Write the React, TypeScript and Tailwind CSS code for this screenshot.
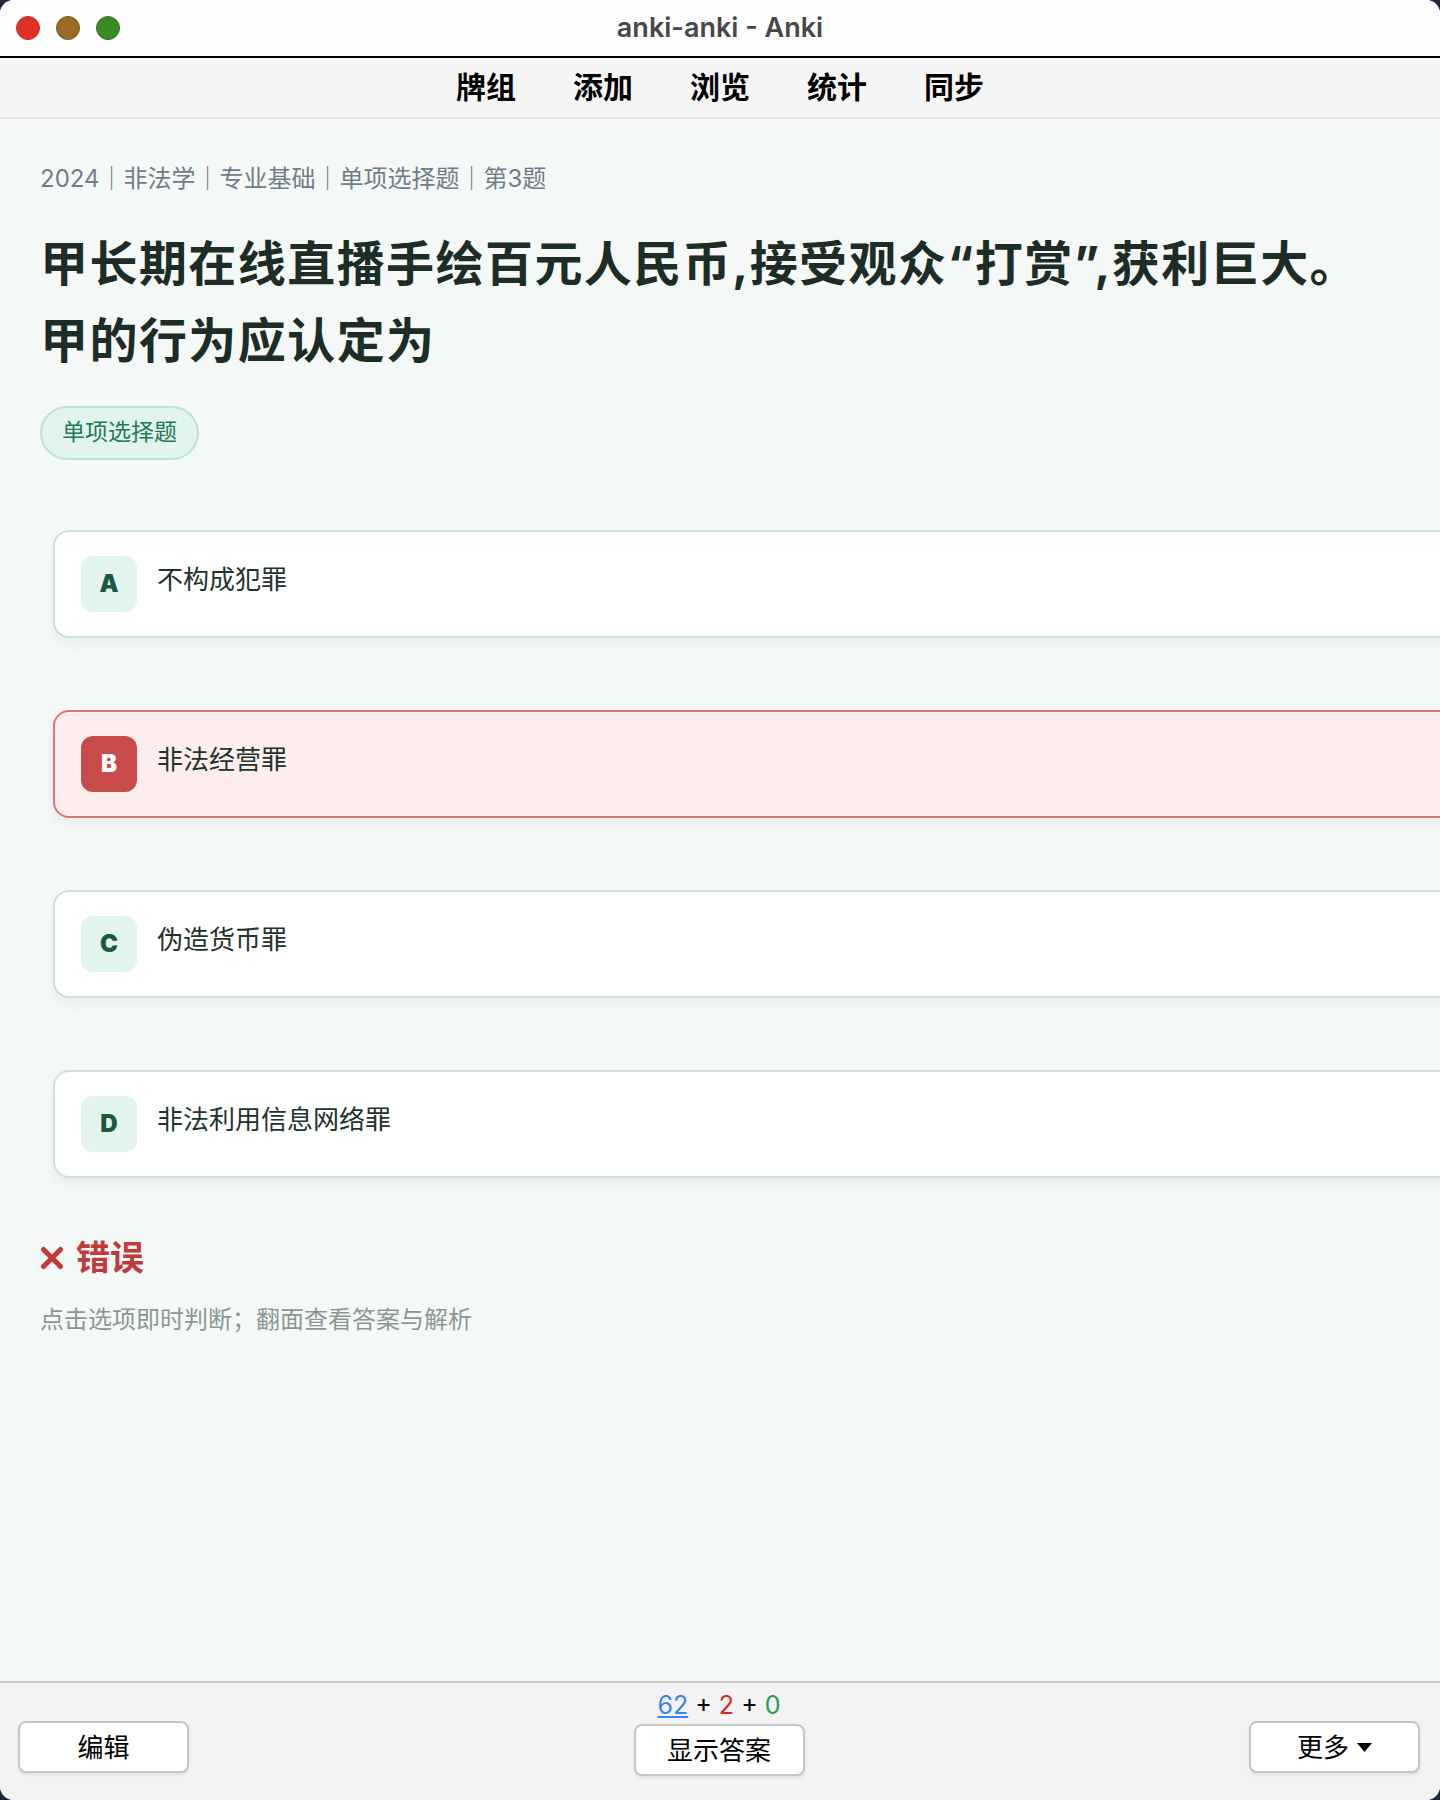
const cjk = "font-['Inter','Noto_Sans_CJK_SC',sans-serif]";

const options = [
  { key: "A", text: "不构成犯罪", wrong: false },
  { key: "B", text: "非法经营罪", wrong: true },
  { key: "C", text: "伪造货币罪", wrong: false },
  { key: "D", text: "非法利用信息网络罪", wrong: false },
];

function Option({ letter, text, wrong }: { letter: string; text: string; wrong: boolean }) {
  return (
    <div
      className={`ml-[13px] -mr-[80px] flex items-start gap-5 rounded-[16px] border-2 px-[26px] py-6 shadow-[0_6px_14px_rgba(20,60,45,0.05)] ${
        wrong ? "border-[#de7575] bg-[#fdeeed]" : "border-[#cfe0da] bg-white"
      }`}
    >
      <div
        className={`flex h-14 w-14 shrink-0 items-center justify-center rounded-[12px] text-[24px] font-black ${
          wrong ? "bg-[#c94c4c] text-white" : "bg-[#e3f3ee] text-[#175a40]"
        }`}
      >
        {letter}
      </div>
      <div className="text-[26px] leading-[48px] text-[#22332c]">{text}</div>
    </div>
  );
}

function Button({ children, className = "" }: { children: React.ReactNode; className?: string }) {
  return (
    <div
      className={`flex h-[52px] w-[171px] items-center justify-center gap-2 rounded-[8px] border-2 border-[#c6c6c6] bg-white text-[26px] text-black shadow-[0_2px_3px_rgba(0,0,0,0.08)] ${className}`}
    >
      {children}
    </div>
  );
}

export default function App() {
  return (
    <div className={`h-[1800px] w-[1440px] bg-[#1d2838] ${cjk}`}>
      <div className="flex h-full flex-col overflow-hidden rounded-[14px] bg-[#f4f8f7]">
        {/* title bar */}
        <div className="relative flex h-[58px] shrink-0 items-center justify-center border-b-2 border-black bg-[#fdfdfd]">
          <div className="absolute left-4 top-4 flex gap-4">
            <span className="h-6 w-6 rounded-full border border-[#c52a24] bg-[#e0302a]" />
            <span className="h-6 w-6 rounded-full border border-[#7a5a20] bg-[#9a6d24]" />
            <span className="h-6 w-6 rounded-full border border-[#2f7322] bg-[#3a8a28]" />
          </div>
          <span className="text-[27px] font-semibold text-[#474747]">anki-anki - Anki</span>
        </div>

        {/* toolbar */}
        <div className="flex h-[61px] shrink-0 items-center justify-center gap-[57px] border-b-2 border-[#e3e3e3] bg-[#f5f5f5] text-[30px] font-bold text-black">
          <span>牌组</span>
          <span>添加</span>
          <span>浏览</span>
          <span>统计</span>
          <span>同步</span>
        </div>

        {/* card content */}
        <div className="flex-1 overflow-hidden px-10 pt-[42px]">
          <div className="text-[24px] leading-9 text-[#6f7e86]">2024｜非法学｜专业基础｜单项选择题｜第3题</div>
          <h1 className="mt-[29px] max-w-[1340px] text-[48px] font-bold leading-[1.6] tracking-[0.03em] text-[#1b2d25]">
            甲长期在线直播手绘百元人民币,接受观众“打赏”,获利巨大。甲的行为应认定为
          </h1>
          <div className="mt-[26px] inline-flex h-[54px] items-center rounded-full border-2 border-[#bce4d3] bg-[#e1f4ed] px-5 text-[23px] text-[#227a56]">
            单项选择题
          </div>

          <div className="mt-[70px] flex flex-col gap-[72px]">
            {options.map((o) => (
              <Option key={o.key} letter={o.key} text={o.text} wrong={o.wrong} />
            ))}
          </div>

          <div className="mt-[56px] flex items-center gap-3 text-[34px] font-bold leading-[48px] text-[#c0393b]">
            <svg width="24" height="24" viewBox="0 0 24 24" className="shrink-0">
              <path d="M3.5 3.5 L20.5 20.5 M20.5 3.5 L3.5 20.5" stroke="#c0393b" strokeWidth="5" strokeLinecap="round" />
            </svg>
            <span>错误</span>
          </div>
          <div className="mt-5 text-[24px] leading-9 text-[#8a9893]">点击选项即时判断；翻面查看答案与解析</div>
        </div>

        {/* bottom bar */}
        <div className="flex h-[119px] shrink-0 items-start justify-between border-t-2 border-[#c9c9c9] bg-[#f3f3f3] pl-[18px] pr-5">
          <Button className="mt-[38px]">编辑</Button>
          <div className="flex flex-col items-center pt-[7px]">
            <div className="text-[25px] leading-[30px]">
              <span className="text-[#3b82f6] underline">62</span>
              <span className="text-black"> + </span>
              <span className="text-[#e02424]">2</span>
              <span className="text-black"> + </span>
              <span className="text-[#1fa04a]">0</span>
            </div>
            <Button className="mt-[4px] w-[170px]">显示答案</Button>
          </div>
          <Button className="mt-[38px] w-[170px]">
            <span>更多</span>
            <svg width="15" height="9" viewBox="0 0 15 9">
              <path d="M0 0 H15 L7.5 9 Z" fill="#000" />
            </svg>
          </Button>
        </div>
      </div>
    </div>
  );
}
